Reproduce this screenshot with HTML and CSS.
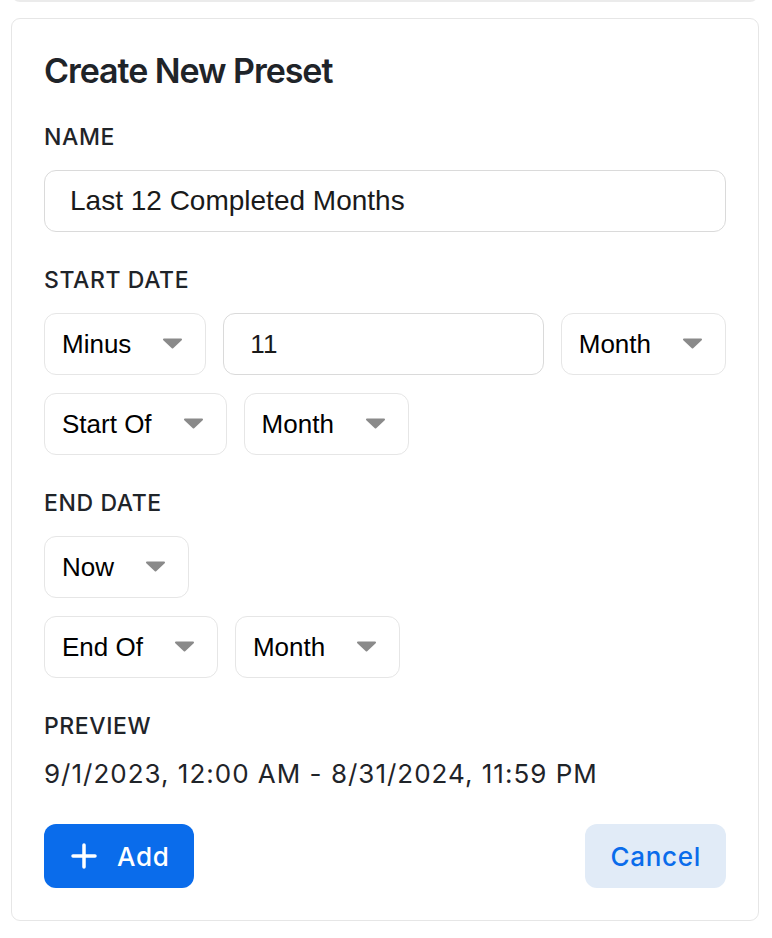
FILE: index.html
```html
<!DOCTYPE html>
<html lang="en">
<head>
<meta charset="utf-8">
<title>Create New Preset</title>
<link rel="stylesheet" href="styles.css">
</head>
<body>
<div class="prev-card"></div>
<section class="card">
  <h2 class="title">Create New Preset</h2>

  <div class="field">
    <div class="label">NAME</div>
    <div class="text-input wide">Last 12 Completed Months</div>
  </div>

  <div class="field">
    <div class="label">START DATE</div>
    <div class="rows">
      <div class="row">
        <div class="select"><span>Minus</span><svg class="caret" viewBox="0 0 21 11"><path d="M2 1.5 H19 L10.5 9.5 Z"/></svg></div>
        <div class="text-input num">11</div>
        <div class="select"><span>Month</span><svg class="caret" viewBox="0 0 21 11"><path d="M2 1.5 H19 L10.5 9.5 Z"/></svg></div>
      </div>
      <div class="row">
        <div class="select"><span>Start Of</span><svg class="caret" viewBox="0 0 21 11"><path d="M2 1.5 H19 L10.5 9.5 Z"/></svg></div>
        <div class="select"><span>Month</span><svg class="caret" viewBox="0 0 21 11"><path d="M2 1.5 H19 L10.5 9.5 Z"/></svg></div>
      </div>
    </div>
  </div>

  <div class="field">
    <div class="label">END DATE</div>
    <div class="rows">
      <div class="row">
        <div class="select"><span>Now</span><svg class="caret" viewBox="0 0 21 11"><path d="M2 1.5 H19 L10.5 9.5 Z"/></svg></div>
      </div>
      <div class="row">
        <div class="select"><span>End Of</span><svg class="caret" viewBox="0 0 21 11"><path d="M2 1.5 H19 L10.5 9.5 Z"/></svg></div>
        <div class="select"><span>Month</span><svg class="caret" viewBox="0 0 21 11"><path d="M2 1.5 H19 L10.5 9.5 Z"/></svg></div>
      </div>
    </div>
  </div>

  <div class="field">
    <div class="label">PREVIEW</div>
    <div class="preview">9/1/2023, 12:00 AM - 8/31/2024, 11:59 PM</div>
  </div>

  <div class="actions">
    <button class="btn btn-primary"><svg class="plus" viewBox="0 0 26 26"><path d="M13 2 V24 M2 13 H24"/></svg><span>Add</span></button>
    <button class="btn btn-secondary">Cancel</button>
  </div>
</section>
</body>
</html>
```

FILE: styles.css
```css
* { box-sizing: border-box; }

body {
  margin: 0;
  padding: 0 0 0 11px;
  background: #ffffff;
  font-family: Inter, "Noto Sans", sans-serif;
  color: #1f2429;
}

.prev-card {
  width: 748px;
  height: 9px;
  margin-top: -7px;
  border: 2px solid #ebebeb;
  border-top: none;
  border-radius: 0 0 9px 9px;
}

.card {
  width: 748px;
  margin-top: 16px;
  border: 1px solid #e6e6e6;
  border-radius: 9px;
  padding: 32px 32px 32px 32px;
}

.title {
  margin: 0 0 32px 0;
  font-size: 34px;
  line-height: 40px;
  font-weight: 600;
  letter-spacing: -1.05px;
  color: #1f2429;
}

.field { margin-bottom: 34px; }

.label {
  font-size: 23px;
  line-height: 28px;
  font-weight: 500;
  letter-spacing: 0.6px;
  margin-bottom: 19px;
  color: #1f2429;
}

.text-input {
  height: 62px;
  border: 1px solid #dadada;
  border-radius: 12px;
  display: flex;
  align-items: center;
  padding-left: 25px;
  font-family: "Liberation Sans", Arial, sans-serif;
  font-size: 28px;
  color: #1a1a1a;
}

.text-input.num {
  flex: 1;
  padding-left: 26px;
  font-size: 26px;
}

.rows {
  display: flex;
  flex-direction: column;
  gap: 18px;
}

.row {
  display: flex;
  gap: 17px;
}

.select {
  height: 62px;
  border: 1px solid #e6e6e6;
  border-radius: 12px;
  display: flex;
  align-items: center;
  padding: 0 22px 0 17px;
  font-family: "Liberation Sans", Arial, sans-serif;
  font-size: 26px;
  color: #000;
}

.caret {
  width: 21px;
  height: 11px;
  margin-left: 31px;
  margin-top: -1px;
}

.caret path {
  fill: #8a8a8a;
  stroke: #8a8a8a;
  stroke-width: 2;
  stroke-linejoin: round;
}

.preview {
  font-size: 26px;
  line-height: 30px;
  letter-spacing: 1px;
  color: #1f2429;
}

.actions {
  display: flex;
  justify-content: space-between;
  margin-top: 35px;
}

.btn {
  height: 64px;
  border: none;
  border-radius: 12px;
  font-family: Inter, "Noto Sans", sans-serif;
  font-size: 26px;
  font-weight: 500;
  letter-spacing: 0.7px;
  display: flex;
  align-items: center;
}

.btn-primary {
  background: #0a6ceb;
  color: #ffffff;
  padding: 0 25px 0 27px;
  gap: 20px;
}

.plus {
  width: 26px;
  height: 26px;
}

.plus path {
  stroke: #ffffff;
  stroke-width: 3.5;
  stroke-linecap: round;
  fill: none;
}

.btn-secondary {
  background: #e1ebf7;
  color: #0a6ceb;
  padding: 0 25px;
}
```
